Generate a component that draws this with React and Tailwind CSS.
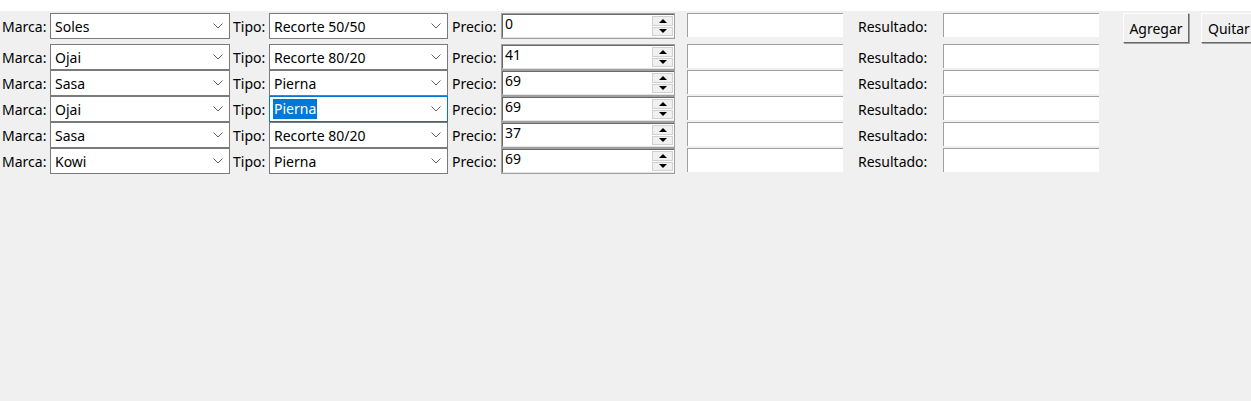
import React from 'react';

const rows = [
  { marca: 'Soles', tipo: 'Recorte 50/50', precio: '0' },
  { marca: 'Ojai', tipo: 'Recorte 80/20', precio: '41' },
  { marca: 'Sasa', tipo: 'Pierna', precio: '69' },
  { marca: 'Ojai', tipo: 'Pierna', precio: '69', focused: true },
  { marca: 'Sasa', tipo: 'Recorte 80/20', precio: '37' },
  { marca: 'Kowi', tipo: 'Pierna', precio: '69' },
];

const Chevron = () => (
  <svg width="10" height="6" viewBox="0 0 10 6" className="shrink-0">
    <path d="M0.5 0.5 L5 5 L9.5 0.5" fill="none" stroke="#606060" strokeWidth="1" />
  </svg>
);

const Combo = ({ value, width, focused }) => (
  <div
    className={`shrink-0 h-[26px] flex items-center justify-between bg-white border pl-[3px] pr-[6px] ${width} ${
      focused ? 'border-[#0078d7]' : 'border-[#7a7a7a]'
    }`}
  >
    {focused ? (
      <span className="bg-[#0078d7] text-white px-[1px] leading-[20px]">{value}</span>
    ) : (
      <span className="px-[1px]">{value}</span>
    )}
    <Chevron />
  </div>
);

const Triangle = ({ up }) => (
  <svg width="8" height="4" viewBox="0 0 8 4">
    <path d={up ? 'M0 4 L4 0 L8 4 Z' : 'M0 0 L4 4 L8 0 Z'} fill="#000" />
  </svg>
);

const Spin = ({ value }) => (
  <div className="shrink-0 w-[174px] h-[26px] flex bg-white border border-[#a0a0a0]">
    <div className="flex-1 flex border border-[#696969] border-r-0 border-b-[#e3e3e3]">
      <span className="pl-[2px] leading-[17px]">{value}</span>
    </div>
    <div className="w-[22px] flex flex-col gap-[1px] py-[1px] pr-[1px] border-t border-[#696969] border-b border-b-[#e3e3e3]">
      <div className="flex-1 flex items-center justify-center bg-[#f0f0f0] border border-[#d0d0d0]">
        <Triangle up />
      </div>
      <div className="flex-1 flex items-center justify-center bg-[#f0f0f0] border border-[#d0d0d0]">
        <Triangle />
      </div>
    </div>
  </div>
);

const Entry = () => (
  <div className="shrink-0 w-[156px] h-[24px] bg-white border-t border-l border-[#a0a0a0]" />
);

const Button = ({ children, className }) => (
  <button
    className={`shrink-0 h-[30px] bg-[#f0f0f0] border border-t-white border-l-white border-r-[#696969] border-b-[#696969] shadow-[1px_1px_0_#a0a0a0] text-[14px] ${className}`}
  >
    {children}
  </button>
);

const Label = ({ children, className }) => (
  <div className={`shrink-0 h-[26px] flex items-center whitespace-nowrap ${className}`}>{children}</div>
);

export default function App() {
  return (
    <div
      className="w-[1251px] h-[401px] overflow-hidden bg-[#f0f0f0] text-[14px] text-black"
      style={{ fontFamily: '"Noto Sans", "Open Sans", sans-serif' }}
    >
      <div className="h-[11px] bg-white" />
      <div className="flex flex-col pt-[2px]">
        {rows.map((r, i) => (
          <div key={i} className={`flex items-start ${i === 0 ? 'h-[31px]' : 'h-[26px]'}`}>
            <Label className="w-[50px] pl-[2px]">Marca:</Label>
            <Combo value={r.marca} width="w-[180px]" />
            <Label className="w-[39px] pl-[3px]">Tipo:</Label>
            <Combo value={r.tipo} width="w-[179px]" focused={r.focused} />
            <Label className="w-[53px] pl-[4px]">Precio:</Label>
            <Spin value={r.precio} />
            <div className="shrink-0 w-[12px]" />
            <Entry />
            <Label className="w-[100px] pl-[15px]">Resultado:</Label>
            <Entry />
            {i === 0 && (
              <div className="flex shrink-0">
                <div className="shrink-0 w-[24px]" />
                <Button className="w-[66px]">Agregar</Button>
                <div className="shrink-0 w-[12px]" />
                <Button className="pl-[6px] pr-[8px]">Quitar</Button>
              </div>
            )}
          </div>
        ))}
      </div>
    </div>
  );
}
